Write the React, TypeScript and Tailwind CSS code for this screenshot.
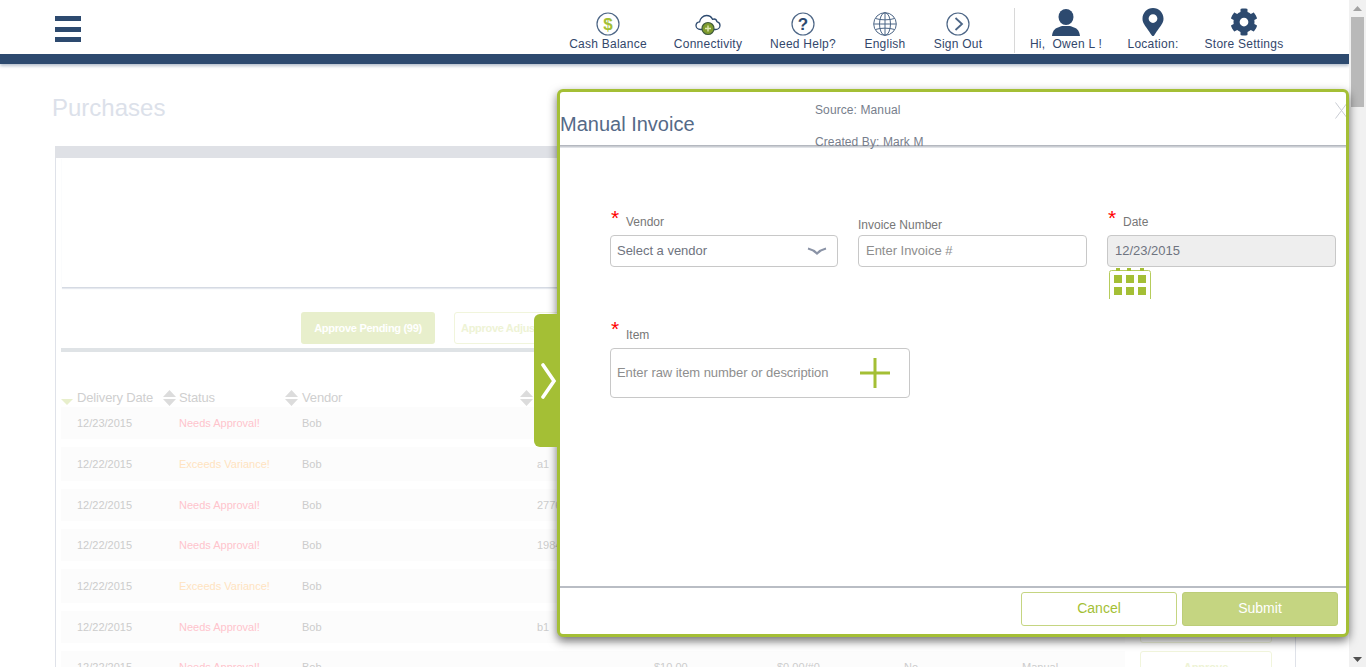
import React from 'react';
import { FaCog, FaMapMarkerAlt } from 'react-icons/fa';

const navy = '#2d4a6f';
const green = '#a4bf35';

const CashIcon = () => (
    <svg width="24" height="24" viewBox="0 0 24 24">
        <circle cx="12" cy="12" r="11" fill="none" stroke="#4d6686" strokeWidth="1.2" />
        <text x="12" y="18" textAnchor="middle" fontSize="17" fontWeight="700" fill={green} fontFamily="Liberation Sans, sans-serif">$</text>
    </svg>
);

const CloudIcon = () => (
    <svg width="26" height="24" viewBox="0 0 26 24">
        <path d="M7 17.5H5.5C3 17.5 1 15.8 1 13.6 1 11.6 2.6 10 4.6 9.8 5 6.5 8 3.5 11.5 3.5c2.8 0 5 1.5 6 3.8 .6-.2 1-.3 1.6-.3 1.400 0 2.500 1.100 2.800 2.600C24 10.200 25 11.700 25 13.400c0 2.300-2 4.100-4.500 4.100H19" fill="none" stroke={navy} strokeWidth="1.300" />
        <circle cx="13" cy="16.500" r="6" fill="#7f9c2e" stroke="#3f5a3c" strokeWidth="1.200" />
        <path d="M13 13.500v6M10 16.500h6" stroke="#dfe9b0" strokeWidth="1.400" />
    </svg>
);

const HelpIcon = () => (
    <svg width="24" height="24" viewBox="0 0 24 24">
        <circle cx="12" cy="12" r="11" fill="none" stroke="#4d6686" strokeWidth="1.200" />
        <text x="12" y="18" textAnchor="middle" fontSize="17" fontWeight="700" fill={navy} fontFamily="Liberation Sans, sans-serif">?</text>
    </svg>
);

const GlobeIcon = () => (
    <svg width="24" height="24" viewBox="0 0 24 24" fill="none" stroke="#4d6686" strokeWidth="1">
        <circle cx="12" cy="12" r="11.300" />
        <ellipse cx="12" cy="12" rx="5.500" ry="11.300" />
        <path d="M1 12h22M2.500 6.500c5 1.800 14 1.800 19 0M2.500 17.500c5-1.800 14-1.800 19 0M12 .7v22.600" />
    </svg>
);

const SignOutIcon = () => (
    <svg width="24" height="24" viewBox="0 0 24 24" fill="none" stroke="#4d6686">
        <circle cx="12" cy="12" r="11" strokeWidth="1.200" />
        <path d="M9.500 6l6.500 6-6.500 6" strokeWidth="1.800" />
    </svg>
);

const UserIcon = () => (
    <svg width="28" height="27" viewBox="0 0 28 27" fill={navy}>
        <ellipse cx="14" cy="8" rx="7.500" ry="8" />
        <path d="M0 27c.6-5 2.500-7.500 6-8.600 2-.7 3-1 4-1.400h8c1 .4 2 .7 4 1.400 3.500 1.100 5.400 3.600 6 8.600z" />
    </svg>
);

const NAV_ITEMS = [
    { label: 'Cash Balance', width: 'w-[100px]', icon: <CashIcon /> },
    { label: 'Connectivity', width: 'w-[100px]', icon: <CloudIcon /> },
    { label: 'Need Help?', width: 'w-[90px]', icon: <HelpIcon /> },
    { label: 'English', width: 'w-[74px]', icon: <GlobeIcon /> },
    { label: 'Sign Out', width: 'w-[72px]', icon: <SignOutIcon /> },
];

const ACCOUNT_ITEMS = [
    { label: 'Hi,  Owen L !', width: 'w-[102px]', icon: <UserIcon /> },
    { label: 'Location:', width: 'w-[72px]', icon: <FaMapMarkerAlt size={28} color={navy} /> },
    { label: 'Store Settings', width: 'w-[110px]', icon: <FaCog size={28} color={navy} /> },
];

const NavItem: React.FC<{ label: string; width: string; icon: React.ReactNode; labelClass: string }> = ({ label, width, icon, labelClass }) => (
    <div className={`${width} flex flex-col items-center`}>
        <div className="h-[28px] flex items-center justify-center">{icon}</div>
        <span className={`${labelClass} text-[12px] leading-[16px] tracking-[0.25px] whitespace-pre text-[#33476b]`}>{label}</span>
    </div>
);

const SortIcon = () => (
    <svg width="13" height="16" viewBox="0 0 13 16" fill="#dcdcdc" className="shrink-0">
        <path d="M6.500 0L13 7H0zM0 9h13l-6.500 7z" />
    </svg>
);

const ROWS = [
    { date: '12/23/2015', status: 'Needs Approval!', ref: '', h: 'h-[32px]' },
    { date: '12/22/2015', status: 'Exceeds Variance!', ref: 'a1', h: 'h-[34px]' },
    { date: '12/22/2015', status: 'Needs Approval!', ref: '2776', h: 'h-[32px]' },
    { date: '12/22/2015', status: 'Needs Approval!', ref: '1984', h: 'h-[32px]' },
    { date: '12/22/2015', status: 'Exceeds Variance!', ref: '', h: 'h-[34px]' },
    { date: '12/22/2015', status: 'Needs Approval!', ref: 'b1', h: 'h-[32px]' },
    { date: '12/22/2015', status: 'Needs Approval!', ref: '', h: 'h-[32px]' },
];

const Background = () => (
    <div className="pl-[55px]">
        <h1 className="mt-[30px] mb-[24px] -ml-[3px] h-[28px] text-[24px] leading-[28px] text-[#dce1ea]">Purchases</h1>
        <div className="w-[1241px] border-x border-[#dfe2e9]">
            <div className="h-[12px] bg-[#dfe1e6] -ml-[1px]" />
            <div className="h-[130px] ml-[6px] border-b border-[#d5dae3] shadow-[0_1px_1px_#e6e9ef]" />
            <div className="mt-[24px] flex ml-[245px]">
                <div className="w-[134px] h-[32px] rounded-[3px] bg-[#e8efcc] text-white text-[11px] tracking-[-0.3px] font-bold flex items-center justify-center">Approve Pending (99)</div>
                <div className="ml-[19px] w-[126px] h-[32px] pl-[6px] rounded-[3px] border border-[#f1f5dc] text-[#eef3d5] text-[11px] tracking-[-0.3px] font-bold flex items-center whitespace-nowrap">Approve Adjustments</div>
            </div>
            <div className="mt-[4px] ml-[5px] h-[4px] bg-[#dfe3e6]" />
            <div className="ml-[5px] h-[55px] flex items-end pb-[1px] text-[13px] leading-[16px] tracking-[-0.15px] text-[#cfcfcf]">
                <div className="w-[102px] flex items-center">
                    <svg width="12" height="6" viewBox="0 0 12 6" className="mt-[7px] shrink-0" fill="#e8efcc"><path d="M0 0h12L6 6z" /></svg>
                    <span className="ml-[4px]">Delivery Date</span>
                </div>
                <div className="w-[122px] flex items-center gap-[3px]"><SortIcon /><span>Status</span></div>
                <div className="w-[235px] flex items-center gap-[4px]"><SortIcon /><span>Vendor</span></div>
                <SortIcon />
            </div>
            <div className="ml-[5px] flex flex-col gap-[8px]">
                {ROWS.map((row, i) => (
                    <div key={i} className={`${row.h} flex shrink-0`}>
                        <div className="w-[1064px] bg-[#fcfcfc] pl-[16px] flex items-center text-[11px] text-[#cccccc]">
                            <span className="w-[102px]">{row.date}</span>
                            <span className={`w-[123px] ${row.status.startsWith('Needs') ? 'text-[#ffc4cc]' : 'text-[#ffe3c0]'}`}>{row.status}</span>
                            <span className="w-[235px]">Bob</span>
                            <span className="w-[117px]">{row.ref}</span>
                            <span className="w-[123px]">$10.00</span>
                            <span className="w-[127px]">$0.00/#0</span>
                            <span className="w-[118px]">No</span>
                            <span>Manual</span>
                        </div>
                        <div className="ml-[15px] w-[132px] rounded-[3px] border border-[#f1f5dc] text-[#eef3d5] text-[11px] font-bold flex items-center justify-center">Approve</div>
                    </div>
                ))}
            </div>
        </div>
    </div>
);

const Star: React.FC<{ top?: string }> = ({ top = '-top-[1px]' }) => (
    <span className={`absolute left-[1px] ${top} text-[21px] leading-[24px] text-[#ff0000]`}>*</span>
);

const fieldClass = 'w-full h-[32px] px-[6px] pb-[1px] rounded-[4px] border border-[#c8c8c8] text-[13px] tracking-[-0.02px] text-[#6f7480] outline-none placeholder:text-[#8e8e8e] bg-white';

const Modal = () => (
    <div className="absolute left-[557px] top-[89px] w-[792px] h-[548px] rounded-[6px] border-[3px] border-[#a4bf35] bg-white shadow-[0_4px_10px_rgba(0,0,0,0.55)] flex flex-col z-10">
        <div className="absolute -left-[26px] top-[222px] w-[26px] h-[133px] pl-[3px] rounded-l-[6px] bg-[#a4bf35] flex items-center justify-center">
            <svg width="16" height="36" viewBox="0 0 16 36" fill="none" stroke="#ffffff" strokeWidth="3.600" strokeLinecap="round"><path d="M2 2l11 16L2 34" /></svg>
        </div>
        <div className="h-[53px] flex shrink-0 relative">
            <h2 className="w-[255px] pt-[20px] text-[20px] leading-[24px] text-[#556a88]">Manual Invoice</h2>
            <div className="pt-[10px] text-[12px] leading-[16px] tracking-[0.1px] text-[#777e8c]">
                <div>Source: Manual</div>
                <div className="mt-[16px]">Created By: Mark M</div>
            </div>
            <div className="absolute right-0 top-[10px] w-[11px] h-[17px] overflow-hidden">
                <svg width="13" height="17" viewBox="0 0 13 17" stroke="#c9ccd3" strokeWidth="1"><path d="M.5.500l12 16M12.500.500l-12 16" /></svg>
            </div>
        </div>
        <div className="h-[3px] shrink-0 bg-gradient-to-b from-[#a9adb5] to-[#eceef1]" />
        <div className="flex-1 pl-[50px] pt-[59px]">
            <div className="flex gap-[20px] items-start">
                <div className="w-[228px]">
                    <div className="relative h-[28px] pl-[16px] pt-[7px] text-[12px] leading-[16px] text-[#777777]"><Star />Vendor</div>
                    <div className={`${fieldClass} flex items-center justify-between pr-[10px]`}>
                        <span>Select a vendor</span>
                        <svg width="20" height="8" viewBox="0 0 20 8" fill="none" stroke="#8a93a6" strokeWidth="2.200"><path d="M1 1.500c4 1 7 3 9 5 2-2 5-4 9-5" /></svg>
                    </div>
                </div>
                <div className="w-[229px]">
                    <div className="h-[28px] pt-[10px] text-[12px] leading-[16px] text-[#777777]">Invoice Number</div>
                    <input className={`${fieldClass} !px-[7px]`} placeholder="Enter Invoice #" />
                </div>
                <div className="w-[229px]">
                    <div className="relative h-[28px] pl-[16px] pt-[7px] text-[12px] leading-[16px] text-[#777777]"><Star />Date</div>
                    <input className={`${fieldClass} !px-[7px] !bg-[#eeeeee]`} value="12/23/2015" readOnly />
                    <svg width="42" height="31" viewBox="0 0 42 31" className="block ml-[2px] mt-[1px]" fill="#a4bf35">
                        <path d="M.5 31V4.500a2 2 0 012-2h37a2 2 0 012 2V31" fill="none" stroke="#b6cc5c" strokeWidth="1" />
                        <path d="M7 0h4v3H7zM18 0h4v3h-4zM31 0h4v3h-4z" />
                        <path d="M5 7h8v8H5zM17 7h8v8h-8zM29 7h8v8h-8zM5 19h8v8H5zM17 19h8v8h-8zM29 19h8v8h-8z" />
                    </svg>
                </div>
            </div>
            <div className="mt-[21px] w-[300px]">
                <div className="relative h-[28px] pl-[16px] pt-[7px] text-[12px] leading-[16px] text-[#777777]"><Star top="-top-[3px]" />Item</div>
                <div className="h-[50px] rounded-[4px] border border-[#c8c8c8] flex items-center pl-[6px] pr-[18px]">
                    <input className="flex-1 min-w-0 text-[13px] tracking-[-0.05px] outline-none placeholder:text-[#8e8e8e]" placeholder="Enter raw item number or description" />
                    <svg width="32" height="32" viewBox="0 0 32 32" stroke="#a4bf35" strokeWidth="3"><path d="M16 1v30M1 16h30" /></svg>
                </div>
            </div>
        </div>
        <div className="h-[2px] shrink-0 bg-[#b9bdc4]" />
        <div className="h-[46px] shrink-0 flex items-start justify-end gap-[5px] pt-[4px] pr-[8px]">
            <button className="w-[156px] h-[34px] pb-[2px] rounded-[3px] border border-[#c5d581] text-[14px] text-[#a4bf35]">Cancel</button>
            <button className="w-[156px] h-[34px] pb-[2px] rounded-[3px] bg-[#c5d581] border border-[#bccd78] text-[14px] text-white">Submit</button>
        </div>
    </div>
);

export default function App() {
    return (
        <div className="relative h-[667px] overflow-hidden flex bg-white font-['Liberation_Sans',Arial,sans-serif]">
            <div className="w-[1349px] shrink-0">
                <header className="shadow-[0_2px_3px_rgba(45,74,111,0.35)]">
                    <div className="h-[54px] pl-[55px] flex">
                        <div className="mt-[16px] w-[26px] h-[26px] flex flex-col justify-between">
                            <div className="h-[5px] bg-[#2d4a6f]" />
                            <div className="h-[5px] bg-[#2d4a6f]" />
                            <div className="h-[5px] bg-[#2d4a6f]" />
                        </div>
                        <div className="ml-[477px] pt-[10px] flex">
                            {NAV_ITEMS.map(item => <NavItem key={item.label} {...item} labelClass="-mt-[2px]" />)}
                        </div>
                        <div className="ml-[20px] mt-[8px] w-px h-[45px] bg-[#d8d8d8]" />
                        <div className="pt-[8px] flex">
                            {ACCOUNT_ITEMS.map(item => <NavItem key={item.label} {...item} labelClass="mt-0" />)}
                        </div>
                    </div>
                    <div className="h-[10px] bg-[#2d4a6f]" />
                </header>
                <Background />
            </div>
            <Modal />
            <div className="w-[17px] shrink-0 bg-[#f1f1f1] flex flex-col items-center justify-between pt-[6px] pb-[5px]">
                <div className="flex flex-col items-center w-full">
                    <svg width="9" height="5" viewBox="0 0 9 5" fill="#a3a3a3"><path d="M4.500 0L9 5H0z" /></svg>
                    <div className="mt-[6px] w-[13px] h-[90px] bg-[#b9b9b9]" />
                </div>
                <svg width="9" height="5" viewBox="0 0 9 5" fill="#505050"><path d="M0 0h9L4.500 5z" /></svg>
            </div>
        </div>
    );
}
